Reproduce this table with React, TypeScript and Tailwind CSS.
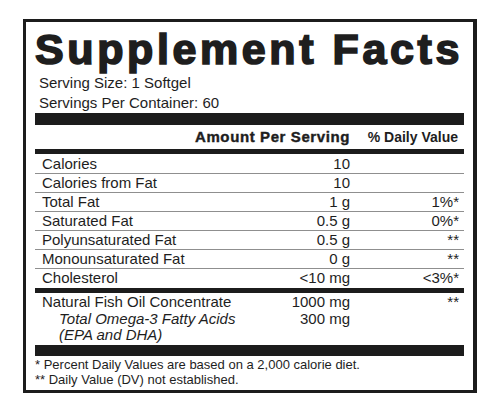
const rows = [
  { label: "Calories", amount: "10", dv: "" },
  { label: "Calories from Fat", amount: "10", dv: "" },
  { label: "Total Fat", amount: "1 g", dv: "1%*" },
  { label: "Saturated Fat", amount: "0.5 g", dv: "0%*" },
  { label: "Polyunsaturated Fat", amount: "0.5 g", dv: "**" },
  { label: "Monounsaturated Fat", amount: "0 g", dv: "**" },
  { label: "Cholesterol", amount: "<10 mg", dv: "<3%*" },
];

export default function App() {
  return (
    <div className="w-[500px] h-[413px] bg-white pt-[19px] pl-[23px] font-['Liberation_Sans',Arial,sans-serif] text-[#1e1e1e]">
      <div className="w-[454px] h-[374px] border-[3px] border-r-[4px] border-[#1c1c1c] px-[9px]">
        {/* Title */}
        <div className="pt-[6px] text-[43px] leading-[42px] font-bold tracking-[3.6px] whitespace-nowrap [-webkit-text-stroke:1.7px_#1e1e1e]">
          Supplement Facts
        </div>
        <div className="mt-[3px] pl-[4px] text-[15px] leading-[20px]">
          <div>Serving Size: 1 Softgel</div>
          <div>Servings Per Container: 60</div>
        </div>
        <div className="h-[12px] bg-[#1c1c1c]" />

        {/* Header */}
        <div className="flex h-[24px] items-center pr-[6px] text-[15px] leading-[24px] font-bold">
          <div className="flex-1" />
          <div className="tracking-[0.6px] [-webkit-text-stroke:0.4px_#1e1e1e]">Amount Per Serving</div>
          <div className="w-[108px] text-right text-[14px]">% Daily Value</div>
        </div>
        <div className="h-[5px] bg-[#1c1c1c]" />

        {/* Rows */}
        {rows.map((r, i) => (
          <div
            key={r.label}
            className={`flex pl-[7px] pr-[5px] text-[15px] ${
              i === 0 ? "h-[19px] leading-[19px]" : "h-[19px] leading-[18px] border-t border-[#8f8f8f]"
            }`}
          >
            <div className="flex-1">{r.label}</div>
            <div>{r.amount}</div>
            <div className="w-[109px] text-right">{r.dv}</div>
          </div>
        ))}
        <div className="mt-[1px] h-[5px] bg-[#1c1c1c]" />

        {/* Fish oil */}
        <div className="flex h-[18px] pl-[7px] pr-[5px] text-[15px] leading-[18px]">
          <div className="flex-1">Natural Fish Oil Concentrate</div>
          <div>1000 mg</div>
          <div className="w-[109px] text-right">**</div>
        </div>
        <div className="flex pl-[24px] pr-[5px] text-[15px] leading-[16px]">
          <div className="flex-1 italic">
            <div>Total Omega-3 Fatty Acids</div>
            <div>(EPA and DHA)</div>
          </div>
          <div>300 mg</div>
          <div className="w-[109px]" />
        </div>
        <div className="mt-[2px] h-[11px] bg-[#1c1c1c]" />

        {/* Footer */}
        <div className="pt-[1px] text-[13px] leading-[15px]">
          <div>* Percent Daily Values are based on a 2,000 calorie diet.</div>
          <div>** Daily Value (DV) not established.</div>
        </div>
      </div>
    </div>
  );
}
